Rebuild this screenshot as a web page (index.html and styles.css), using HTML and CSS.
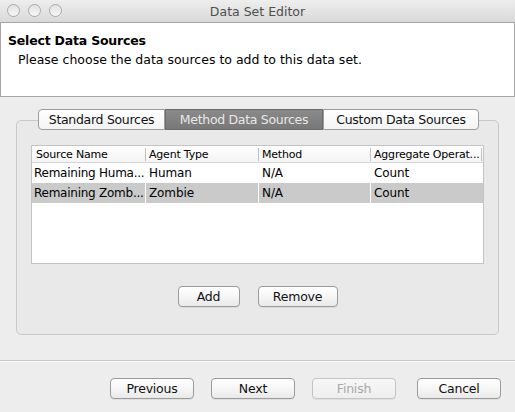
FILE: index.html
```
<!DOCTYPE html>
<html>
<head>
<meta charset="utf-8">
<link rel="stylesheet" href="styles.css">
</head>
<body>
<div class="window">
  <div class="titlebar">
    <div class="lights">
      <span class="light"></span><span class="light"></span><span class="light"></span>
    </div>
    <div class="title">Data Set Editor</div>
  </div>
  <div class="header">
    <div class="h-title">Select Data Sources</div>
    <div class="h-desc">Please choose the data sources to add to this data set.</div>
  </div>
  <div class="main">
    <div class="tabs">
      <div class="tab tab-first">Standard Sources</div>
      <div class="tab tab-active">Method Data Sources</div>
      <div class="tab tab-last">Custom Data Sources</div>
    </div>
    <div class="pane">
      <div class="table">
        <div class="row head">
          <div class="cell c1">Source Name</div>
          <div class="cell c2">Agent Type</div>
          <div class="cell c3">Method</div>
          <div class="cell c4">Aggregate Operat...</div>
        </div>
        <div class="row">
          <div class="cell c1">Remaining Huma...</div>
          <div class="cell c2">Human</div>
          <div class="cell c3">N/A</div>
          <div class="cell c4">Count</div>
        </div>
        <div class="row selected">
          <div class="cell c1">Remaining Zomb...</div>
          <div class="cell c2">Zombie</div>
          <div class="cell c3">N/A</div>
          <div class="cell c4">Count</div>
        </div>
      </div>
      <div class="pane-buttons">
        <button class="btn btn-add">Add</button>
        <button class="btn btn-remove">Remove</button>
      </div>
    </div>
  </div>
  <div class="footer">
    <button class="btn btn-wide">Previous</button>
    <button class="btn btn-wide">Next</button>
    <button class="btn btn-wide disabled">Finish</button>
    <button class="btn btn-wide btn-cancel">Cancel</button>
  </div>
</div>
</body>
</html>
```
FILE: styles.css
```
* { box-sizing: border-box; }
html, body { margin: 0; padding: 0; }
body {
  width: 515px;
  height: 412px;
  overflow: hidden;
  background: #ededed;
  font-family: "DejaVu Sans", "Open Sans", sans-serif;
  font-size: 12px;
  color: #000;
}
.window {
  width: 515px;
  height: 412px;
  display: flex;
  flex-direction: column;
  background: #ededed;
}
.window > * { flex-shrink: 0; }
.titlebar {
  height: 22px;
  position: relative;
  background: linear-gradient(#eeeeee, #d9d9d9);
  display: flex;
  align-items: center;
  justify-content: center;
}
.lights {
  position: absolute;
  left: 7px;
  top: 4px;
  display: flex;
  gap: 8px;
}
.light {
  width: 13px;
  height: 13px;
  border-radius: 50%;
  border: 1px solid #a9a9a9;
  background: linear-gradient(#e2e2e2, #f7f7f7);
}
.title {
  font-family: "DejaVu Sans", sans-serif;
  font-size: 12.5px;
  color: #4f4f4f;
}
.header {
  height: 75px;
  background: #fff;
  border: 1px solid #a6a6a6;
  padding: 10px 0 0 7px;
}
.h-title {
  font-weight: bold;
  font-size: 12.5px;
  letter-spacing: -0.2px;
}
.h-desc {
  margin-top: 4px;
  padding-left: 10px;
  font-size: 12.5px;
}
.main {
  padding: 12px 16px 0 16px;
  height: 263px;
  display: flex;
  flex-direction: column;
}
.tabs {
  display: flex;
  justify-content: center;
  position: relative;
  z-index: 2;
  padding-left: 2px;
}
.tab {
  height: 21px;
  line-height: 19px;
  font-size: 12.5px;
  letter-spacing: -0.3px;
  border: 1px solid #9c9c9c;
  background: linear-gradient(#ffffff, #f3f3f3);
  text-align: center;
  color: #111;
}
.tab-first { width: 127px; border-radius: 4px 0 0 4px; }
.tab-active {
  width: 158px;
  border-color: #6b6b6b;
  background: linear-gradient(#8a8a8a, #787878);
  color: #e8e8e8;
}
.tab-last { width: 156px; border-radius: 0 4px 4px 0; }
.pane {
  margin-top: -10px;
  height: 215px;
  border: 1px solid #c9c9c9;
  border-radius: 5px;
  background: #e9e9e9;
  padding: 24px 14px 0 14px;
  display: flex;
  flex-direction: column;
}
.table {
  height: 119px;
  background: #fff;
  border: 1px solid #c4c4c4;
}
.row {
  display: grid;
  grid-template-columns: 114px 113px 112px 111px;
  height: 20px;
  align-items: center;
  font-size: 12px;
  letter-spacing: -0.1px;
}
.row.head {
  height: 17px;
  font-size: 11px;
  letter-spacing: -0.2px;
  border-bottom: 1px solid #d4d4d4;
  background: linear-gradient(#ffffff, #f4f4f4);
}
.cell {
  padding-left: 3px;
  white-space: nowrap;
  overflow: visible;
  height: 100%;
  display: flex;
  align-items: center;
}
.head .cell { border-right: 1px solid #c2c2c2; height: 13px; }
.head .c1 { padding-left: 4px; }
.row:not(.head) .c1 { padding-left: 2px; letter-spacing: -0.25px; }
.row.selected { background: #cacaca; }
.row.selected .cell { border-right: 1px solid #fff; }
.row.selected .c4 { border-right: none; }
.pane-buttons {
  margin-top: 22px;
  display: flex;
  justify-content: center;
  gap: 18px;
}
.btn {
  height: 21px;
  border: 1px solid #9a9a9a;
  border-radius: 4px;
  background: linear-gradient(#ffffff, #f6f6f6 50%, #e9e9e9);
  font-family: "DejaVu Sans", "Open Sans", sans-serif;
  font-size: 12.5px;
  letter-spacing: -0.2px;
  color: #111;
  padding: 0;
  line-height: 19px;
  box-shadow: 0 1px 0 rgba(0,0,0,0.06);
}
.btn-add { width: 62px; }
.btn-remove { width: 80px; }
.footer {
  border-top: 1px solid #c9c9c9;
  box-shadow: inset 0 1px 0 #f8f8f8;
  padding: 17px 14px 0 0;
  display: flex;
  justify-content: flex-end;
  gap: 17px;
}
.btn-wide { width: 84px; }
.btn-cancel { margin-left: 4px; }
.disabled {
  color: #a8a8a8;
  border-color: #c4c4c4;
  background: linear-gradient(#f7f7f7, #eeeeee);
}
```
